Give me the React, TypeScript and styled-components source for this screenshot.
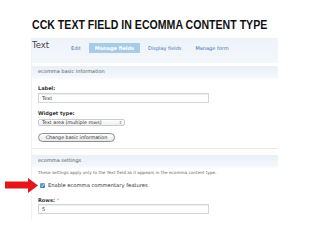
import styled, { createGlobalStyle } from "styled-components";

const GlobalStyle = createGlobalStyle`
  html, body {
    margin: 0;
    padding: 0;
    background: #ffffff;
  }
  body {
    width: 320px;
    height: 240px;
    overflow: hidden;
    font-family: "DejaVu Sans", Verdana, sans-serif;
  }
`;

const tabs = ["Edit", "Manage fields", "Display fields", "Manage form"];

const App = () => {
  return (
    <Page>
      <GlobalStyle />
      <Title>CCK TEXT FIELD IN ECOMMA CONTENT TYPE</Title>
      <Panel>
        <Header>
          <PageName>Text</PageName>
          <Tabs>
            {tabs.map((t) => (
              <Tab key={t} $active={t === "Manage fields"}>
                {t}
              </Tab>
            ))}
          </Tabs>
        </Header>

        <Fieldset>
          <Legend>ecomma basic information</Legend>
          <FieldBody>
            <FieldLabel>Label:</FieldLabel>
            <TextInput $width={171}>Text</TextInput>
            <FieldLabel $gap={7}>Widget type:</FieldLabel>
            <Select>
              <span>Text area (multiple rows)</span>
              <SelectArrows>⇕</SelectArrows>
            </Select>
            <Button>Change basic information</Button>
          </FieldBody>
        </Fieldset>

        <Fieldset $last>
          <Legend>ecomma settings</Legend>
          <Description>
            These settings apply only to the <em>Text</em> field as it appears
            in the ecomma content type.
          </Description>
          <FieldBody $last>
            <CheckRow>
              <Arrow width="33" height="15" viewBox="0 0 33 15">
                <rect x="0" y="3.5" width="25" height="7" fill="#e3161c" />
                <polygon points="23,0 33,7.5 23,15" fill="#e3161c" />
              </Arrow>
              <Checkbox>
                <svg width="5" height="5" viewBox="0 0 5 5">
                  <path
                    d="M1 2.6 L2.1 3.7 L4.1 1.2"
                    stroke="#ffffff"
                    strokeWidth="0.8"
                    fill="none"
                  />
                </svg>
              </Checkbox>
              <CheckText>Enable ecomma commentary features</CheckText>
            </CheckRow>
            <FieldLabel $gap={9}>
              Rows: <Required>*</Required>
            </FieldLabel>
            <TextInput $width={171} $gap={1}>
              5
            </TextInput>
          </FieldBody>
        </Fieldset>
      </Panel>
    </Page>
  );
};

export default App;

const Page = styled.div`
  padding: 17px 0 0 32px;
`;

const Title = styled.h1`
  margin: 0;
  font-family: "Liberation Sans", Arial, sans-serif;
  font-weight: 700;
  font-size: 12.6px;
  line-height: 16px;
  color: #111111;
  white-space: nowrap;
  transform: scaleX(0.84);
  transform-origin: left center;
`;

const Panel = styled.div`
  margin-top: 5px;
  width: 246px;
  box-shadow: -1px 0 0 #f0f3f6;
  padding-bottom: 6px;
`;

const Header = styled.div`
  height: 25px;
  display: flex;
  align-items: flex-start;
  background: linear-gradient(#edf3f9, #f4f7fb);
`;

const PageName = styled.div`
  font-family: "DejaVu Sans", Verdana, sans-serif;
  font-size: 8.5px;
  line-height: 12px;
  margin-top: 1px;
  color: #444444;
  width: 33px;
`;

const Tabs = styled.div`
  display: flex;
  gap: 2px;
  margin-top: 5px;
`;

const Tab = styled.div<{ $active?: boolean }>`
  height: 10px;
  line-height: 10px;
  padding: 0 6px;
  font-size: 5px;
  font-weight: ${(p) => (p.$active ? 700 : 400)};
  color: ${(p) => (p.$active ? "#ffffff" : "#3a74b4")};
  background: ${(p) => (p.$active ? "#a8cce6" : "transparent")};
  white-space: nowrap;
`;

const Fieldset = styled.div<{ $last?: boolean }>`
  margin-top: ${(p) => (p.$last ? "6px" : "3px")};
  border-bottom: ${(p) => (p.$last ? "none" : "1px solid #e8eaec")};
`;

const Legend = styled.div`
  height: 14px;
  box-sizing: border-box;
  padding: 1px 0 0 6px;
  border-top: 1px solid #e9eff5;
  background: linear-gradient(#e8f0f8, #f5f8fc 80%, #ffffff);
  font-size: 5px;
  line-height: 6px;
  color: #555555;
`;

const Description = styled.div`
  padding-left: 6px;
  margin-top: 1px;
  font-size: 4.2px;
  line-height: 6px;
  color: #666666;
  white-space: nowrap;
`;

const FieldBody = styled.div<{ $last?: boolean }>`
  padding: ${(p) => (p.$last ? "0 0 0 6px" : "5px 0 6px 6px")};
  display: flex;
  flex-direction: column;
  align-items: flex-start;
`;

const FieldLabel = styled.div<{ $gap?: number }>`
  margin-top: ${(p) => p.$gap ?? 0}px;
  font-size: 5px;
  line-height: 6px;
  font-weight: 700;
  color: #333333;
`;

const Required = styled.span`
  color: #f0a830;
`;

const TextInput = styled.div<{ $width: number; $gap?: number }>`
  margin-top: ${(p) => p.$gap ?? 2}px;
  width: ${(p) => p.$width}px;
  height: 10px;
  box-sizing: border-box;
  border: 1px solid #d3d6d9;
  box-shadow: inset 0 1px 0 #eeeeee;
  background: #ffffff;
  padding-left: 3px;
  font-size: 5px;
  line-height: 8px;
  color: #333333;
`;

const Select = styled.div`
  margin-top: 3px;
  width: 87px;
  height: 7px;
  box-sizing: border-box;
  border: 1px solid #c8ccd0;
  border-radius: 2px;
  background: linear-gradient(#ffffff, #eeeeee);
  display: flex;
  align-items: center;
  justify-content: space-between;
  padding: 0 2px 0 3px;
  font-size: 4.8px;
  line-height: 5px;
  color: #333333;
  white-space: nowrap;
`;

const SelectArrows = styled.span`
  font-size: 4px;
  color: #777777;
`;

const Button = styled.div`
  margin-top: 7px;
  width: 77px;
  height: 9px;
  box-sizing: border-box;
  border: 1px solid #8a8e92;
  border-radius: 5px;
  background: linear-gradient(#ffffff, #e8e8e8);
  font-size: 4.8px;
  line-height: 7px;
  text-align: center;
  color: #333333;
  white-space: nowrap;
`;

const CheckRow = styled.div`
  position: relative;
  margin-top: 6px;
  display: flex;
  align-items: center;
  height: 6px;
  padding-left: 2px;
  gap: 3px;
`;

const Arrow = styled.svg`
  position: absolute;
  left: -33px;
  top: -4px;
`;

const Checkbox = styled.div`
  width: 5px;
  height: 5px;
  box-sizing: border-box;
  border-radius: 1px;
  background: linear-gradient(#6aa6e6, #2f72c4);
  display: flex;
  svg {
    display: block;
  }
`;

const CheckText = styled.div`
  font-size: 5.2px;
  line-height: 6px;
  color: #333333;
  white-space: nowrap;
`;
